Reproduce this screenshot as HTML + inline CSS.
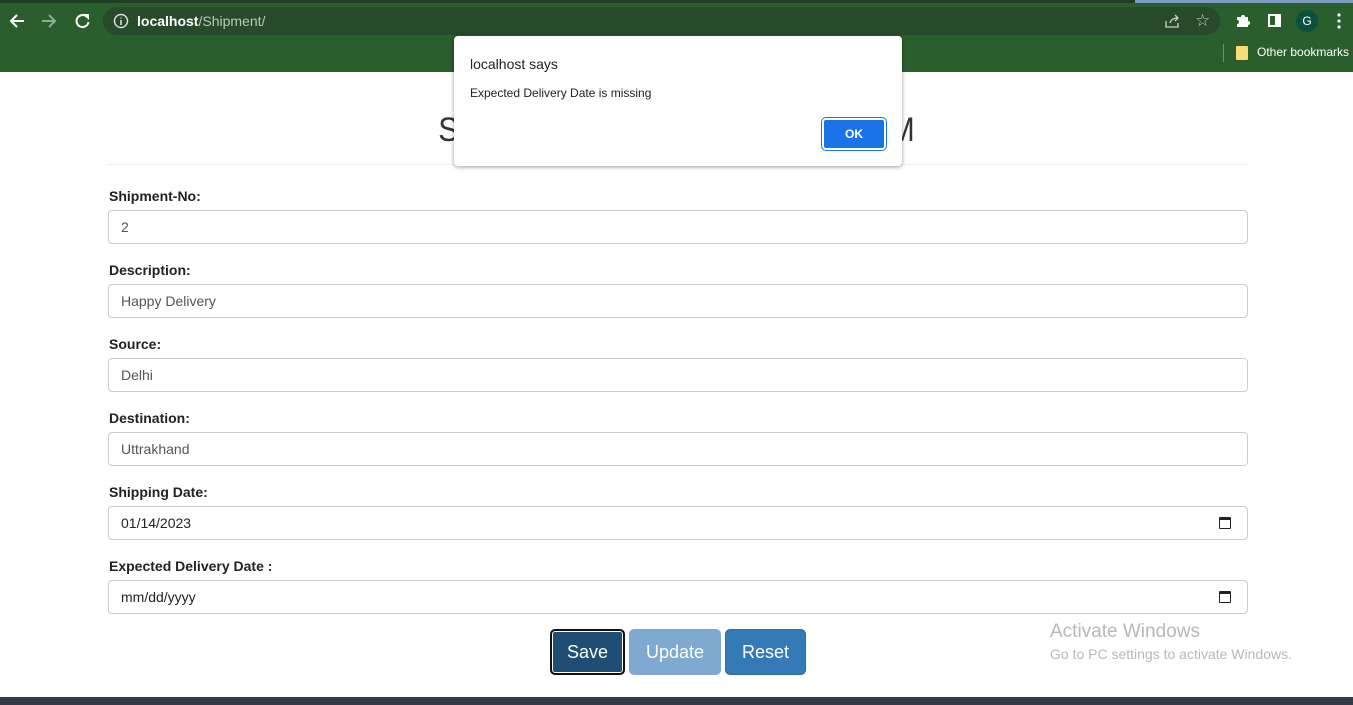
<!DOCTYPE html>
<html><head><style>
*{box-sizing:border-box;margin:0;padding:0}
body{width:1353px;height:705px;overflow:hidden;background:#fff;font-family:"Liberation Sans",sans-serif;position:relative;color:#333}
.top{position:absolute;left:0;top:0;width:1353px;height:72px;background:#2a5e2c}
.strip{position:absolute;left:0;top:0;width:1353px;height:3px;background:#1f3f22}
.tab2{position:absolute;left:1135px;top:0;width:218px;height:3px;background:#7d9cc0}
.url{position:absolute;left:103px;top:7px;width:1117px;height:28px;border-radius:14px;background:#264a2a}
.t{position:absolute;color:#fff;font-size:14px;white-space:nowrap}
.abs{position:absolute}
label{position:absolute;left:109px;font-weight:bold;font-size:14px;color:#222}
.in{position:absolute;left:108px;width:1140px;height:34px;border:1px solid #ccc;border-radius:4px;font-size:14px;color:#555;padding:8px 12px;line-height:16px}
.cal{position:absolute;right:16px;top:10px;width:12px;height:12px;border:1.5px solid #222;border-top-width:3px;border-radius:1px}
.btn{position:absolute;top:629px;height:46px;border-radius:5px;color:#fff;font-size:18px;text-align:center;line-height:46px}
</style></head><body>
<div class="top"></div><div class="strip"></div><div class="tab2"></div>
<svg class="abs" style="left:8px;top:12px" width="100" height="18" viewBox="0 0 100 18">
<path d="M16 9H3M9 3L3 9l6 6" stroke="#fff" stroke-width="2" fill="none"/>
<path d="M34 9h13M41 3l6 6-6 6" stroke="#8fae91" stroke-width="2" fill="none"/>
<path d="M79 5a6 6 0 1 0 1.5 5" stroke="#fff" stroke-width="2" fill="none"/><path d="M75 2h6v6z" fill="#fff"/>
</svg>
<div class="url"></div>
<svg class="abs" style="left:113px;top:13px" width="16" height="16"><circle cx="8" cy="8" r="6.5" stroke="#ddd" stroke-width="1.5" fill="none"/><path d="M8 7v5M8 4.5v1" stroke="#ddd" stroke-width="1.6"/></svg>
<div class="t" style="left:137px;top:13px"><b style="color:#fff">localhost</b><span style="color:#b9c9ba">/Shipment/</span></div>
<div class="t" style="left:1195px;top:11px;font-size:17px;color:#ccc">☆</div>
<svg class="abs" style="left:1164px;top:13px" width="16" height="16"><path d="M2 8v6h12v-4M6 10c1-4 4-5 8-5M11 2l3 3-3 3" stroke="#ccc" stroke-width="1.3" fill="none"/></svg>
<svg class="abs" style="left:1235px;top:12px" width="16" height="16"><path d="M2 5h4a2 2 0 1 1 4 0h3v4a2 2 0 1 1 0 4v2H2v-3a2 2 0 1 0 0-4z" fill="#fff"/></svg>
<div class="abs" style="left:1268px;top:14px;width:13px;height:13px;border:2px solid #fff;border-right-width:6px"></div>
<div class="abs" style="left:1296px;top:10px;width:22px;height:22px;border-radius:50%;background:#0b4f3f;color:#fff;font-size:12px;text-align:center;line-height:22px">G</div>
<svg class="abs" style="left:1336px;top:13px" width="6" height="16"><circle cx="3" cy="2" r="1.6" fill="#fff"/><circle cx="3" cy="8" r="1.6" fill="#fff"/><circle cx="3" cy="14" r="1.6" fill="#fff"/></svg>
<div class="abs" style="left:1223px;top:44px;width:1px;height:18px;background:#6f8f70"></div>
<div class="abs" style="left:1236px;top:46px;width:12px;height:14px;background:#fbdc74;border-radius:1px"></div>
<div class="t" style="left:1257px;top:45px;font-size:12px">Other bookmarks</div>

<div class="abs" style="left:0;top:111px;width:1353px;text-align:center;font-size:34px;color:#333;white-space:nowrap;transform:scaleX(0.9)">SHIPMENT INFORMATION FORM</div>
<div class="abs" style="left:108px;top:164px;width:1140px;height:1px;background:#eee"></div>

<label style="top:188px">Shipment-No:</label><div class="in" style="top:210px">2</div>
<label style="top:262px">Description:</label><div class="in" style="top:284px">Happy Delivery</div>
<label style="top:336px">Source:</label><div class="in" style="top:358px">Delhi</div>
<label style="top:410px">Destination:</label><div class="in" style="top:432px">Uttrakhand</div>
<label style="top:484px">Shipping Date:</label><div class="in" style="top:506px;color:#222">01/14/2023<span class="cal"></span></div>
<label style="top:558px">Expected Delivery Date :</label><div class="in" style="top:580px;color:#222">mm/dd/yyyy<span class="cal"></span></div>

<div class="btn" style="left:550px;width:75px;background:#204d74;border:2px solid #111;box-shadow:inset 0 0 0 1px #fff;line-height:42px">Save</div>
<div class="btn" style="left:629px;width:92px;background:#7fa9d0">Update</div>
<div class="btn" style="left:725px;width:81px;background:#337ab7;border:1px solid #2e6da4;line-height:44px">Reset</div>

<div class="abs" style="left:1050px;top:621px;font-size:19px;color:#b8b8b8">Activate Windows</div>
<div class="abs" style="left:1050px;top:646px;font-size:14px;color:#b8b8b8">Go to PC settings to activate Windows.</div>

<div class="abs" style="left:0;top:697px;width:1353px;height:8px;background:#343b46"></div>

<div class="abs" style="left:454px;top:36px;width:448px;height:130px;background:#fff;border-radius:4px;box-shadow:0 1px 4px rgba(0,0,0,.4)">
<div class="abs" style="left:16px;top:20px;font-size:14px;color:#222">localhost says</div>
<div class="abs" style="left:16px;top:50px;font-size:12px;color:#222">Expected Delivery Date is missing</div>
<div class="abs" style="left:368px;top:82px;width:64px;height:32px;background:#1a73e8;border-radius:4px;box-shadow:0 0 0 2px #fff inset,0 0 0 1px #1a73e8;color:#fff;font-size:12px;font-weight:bold;text-align:center;line-height:32px">OK</div>
</div>
</body></html>
